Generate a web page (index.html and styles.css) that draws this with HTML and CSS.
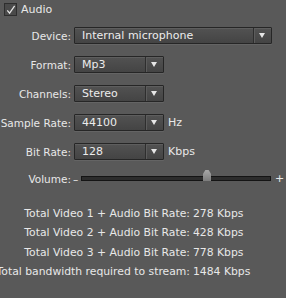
FILE: index.html
```html
<!DOCTYPE html>
<html lang="en">
<head>
    <meta charset="UTF-8">
    <title>Audio</title>
    <link rel="stylesheet" href="styles.css">
</head>
<body>

<div class="panel">
    <div class="audio-head">
        <span class="check">
            <svg width="12" height="12" viewBox="0 0 12 12"><path d="M2.5 6.5 L5 9.5 L10.5 1.5" fill="none" stroke="#e2e2e2" stroke-width="1.4"/></svg>
        </span>
        <span>Audio</span>
    </div>

    <div class="row">
        <label>Device:</label>
        <div class="select wide"><span class="value">Internal microphone</span><span class="arrow"></span></div>
    </div>
    <div class="row">
        <label>Format:</label>
        <div class="select"><span class="value">Mp3</span><span class="arrow"></span></div>
    </div>
    <div class="row">
        <label>Channels:</label>
        <div class="select"><span class="value">Stereo</span><span class="arrow"></span></div>
    </div>
    <div class="row">
        <label>Sample Rate:</label>
        <div class="select"><span class="value">44100</span><span class="arrow"></span></div>
        <span class="unit">Hz</span>
    </div>
    <div class="row">
        <label>Bit Rate:</label>
        <div class="select"><span class="value">128</span><span class="arrow"></span></div>
        <span class="unit">Kbps</span>
    </div>
    <div class="row volume">
        <label>Volume:</label>
        <span class="minus">&ndash;</span>
        <div class="track"><span class="thumb"></span></div>
        <span class="plus">+</span>
    </div>

    <div class="totals">
        <div class="t-label"><span>Total Video 1 + Audio Bit Rate:</span></div><div>278 Kbps</div>
        <div class="t-label"><span>Total Video 2 + Audio Bit Rate:</span></div><div>428 Kbps</div>
        <div class="t-label"><span>Total Video 3 + Audio Bit Rate:</span></div><div>778 Kbps</div>
        <div class="t-label"><span>Total bandwidth required to stream:</span></div><div>1484 Kbps</div>
    </div>
</div>

</body>
</html>
```

FILE: styles.css
```css
body {
    margin: 0;
    background-color: #595959;
    color: #e8e8e8;
    font-family: 'DejaVu Sans', sans-serif;
    font-size: 10.5px;
}
.panel {
    width: 286px;
    height: 298px;
    overflow: hidden;
}
.audio-head {
    display: flex;
    align-items: center;
    gap: 4px;
    padding: 3px 0 0 4px;
    height: 13px;
    font-size: 11px;
}
.check {
    width: 11px;
    height: 11px;
    border: 1px solid #2e2e2e;
    background-color: #4a4a4a;
    display: flex;
}
.row {
    display: flex;
    align-items: center;
    height: 17px;
    margin-top: 12px;
}
.audio-head + .row {
    margin-top: 11px;
}
.row label {
    width: 71px;
    text-align: right;
    margin-right: 3px;
    white-space: nowrap;
}
.select {
    box-sizing: border-box;
    width: 90px;
    height: 17px;
    display: flex;
    border: 1px solid #262626;
    background: linear-gradient(#525252, #444444);
    box-shadow: inset 0 1px 0 #5e5e5e, 0 1px 0 #646464;
    border-radius: 1px;
}
.select.wide {
    width: 198px;
}
.select .value {
    flex: 1;
    padding-left: 7px;
    line-height: 15px;
    font-size: 11px;
    color: #ececec;
}
.select .arrow {
    width: 17px;
    border-left: 1px solid #2e2e2e;
    box-shadow: inset 1px 0 0 #5c5c5c;
    position: relative;
}
.select .arrow::after {
    content: "";
    position: absolute;
    left: 5px;
    top: 5px;
    border-left: 3.5px solid transparent;
    border-right: 3.5px solid transparent;
    border-top: 5px solid #e6e6e6;
}
.unit {
    margin-left: 4px;
    font-size: 11px;
}
.volume {
    margin-top: 10px;
}
.minus {
    width: 8px;
    margin-left: -1px;
}
.track {
    position: relative;
    width: 188px;
    height: 3px;
    border: 1px solid #141414;
    background-color: #2c2c2c;
}
.thumb {
    position: absolute;
    left: 121px;
    top: -7px;
    width: 8px;
    height: 11px;
    background: linear-gradient(#a8a8a8, #7c7c7c);
    clip-path: polygon(30% 0, 70% 0, 100% 35%, 100% 100%, 0 100%, 0 35%);
}
.plus {
    margin-left: 4px;
    font-size: 11px;
}
.totals {
    display: grid;
    grid-template-columns: 190px auto;
    column-gap: 3px;
    grid-auto-rows: 19.3px;
    align-items: center;
    margin-top: 17px;
    font-size: 10.8px;
    white-space: nowrap;
}
.t-label {
    display: flex;
    justify-content: flex-end;
}
```
